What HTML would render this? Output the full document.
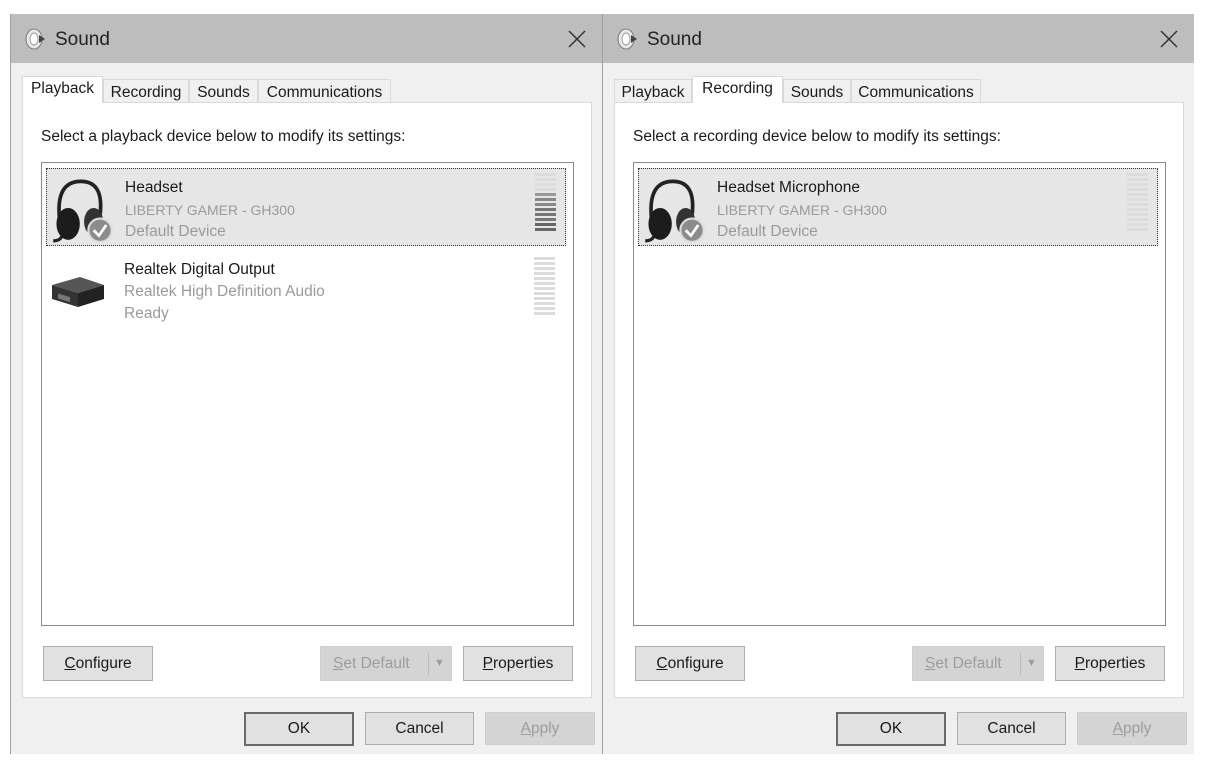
<!DOCTYPE html>
<html><head><style>
*{box-sizing:border-box;margin:0;padding:0}
body{width:1209px;height:767px;background:#fff;position:relative;overflow:hidden;font-family:"Liberation Sans",sans-serif;color:#1a1a1a}
.a{position:absolute}
.win{position:absolute;top:14px;width:592px;height:740px;background:#f0f0f0;border-left:1px solid #a0a0a0}
.title{position:absolute;left:0;top:0;right:0;height:49px;background:#bdbdbd}
.title .t{position:absolute;left:44px;top:15px;font-size:19px;color:#222}
.panel{position:absolute;left:11px;top:88px;width:570px;height:596px;background:#fff;border:1px solid #d9d9d9}
.tab{position:absolute;top:65px;height:24px;background:#f0f0f0;border:1px solid #d9d9d9;border-bottom:none;font-size:15.5px;padding:4px 0 0 0;text-align:center}
.tab.sel{top:62px;height:27px;background:#fff;z-index:2;padding-top:3px}
.hdr{position:absolute;left:30px;top:114px;font-size:15.5px}
.list{position:absolute;left:30px;top:148px;width:533px;height:464px;border:1px solid #8a8a8a;background:#fff}
.item{position:absolute;left:4px;width:520px;height:78px}
.item.s{background:#e6e6e6;border:1px dotted #333}
.n{position:absolute;left:78px;font-size:15.5px;color:#1a1a1a}
.g{position:absolute;left:78px;font-size:15.5px;color:#9a9a9a}
.meter{position:absolute;left:488px;width:21px}
.meter div{height:3px;margin-bottom:2px;background:#dcdcdc}
.btn{position:absolute;height:35px;background:#e1e1e1;border:1px solid #adadad;font-size:15.5px;text-align:center;line-height:33px}
.dis{background:#d4d4d4;border-color:#cfcfcf;color:#9d9d9d}
u{text-decoration:underline}
</style></head><body>

<!-- LEFT -->
<div class="win" style="left:10px">
 <div class="title">
  <svg class="a" style="left:13px;top:13px" width="24" height="24" viewBox="0 0 24 24"><ellipse cx="10" cy="12" rx="8" ry="10" fill="#e8e8e8" stroke="#777"/><ellipse cx="10" cy="12" rx="4" ry="6" fill="#fff" stroke="#999"/><path d="M15 8 L21 12 L15 16 Z" fill="#444"/></svg>
  <div class="t">Sound</div>
  <svg class="a" style="right:16px;top:16px" width="18" height="18" viewBox="0 0 18 18"><path d="M1 1L17 17M17 1L1 17" stroke="#333" stroke-width="1.5"/></svg>
 </div>
 <div class="tab sel" style="left:11px;width:81px">Playback</div>
 <div class="tab" style="left:92px;width:86px">Recording</div>
 <div class="tab" style="left:178px;width:69px">Sounds</div>
 <div class="tab" style="left:247px;width:133px">Communications</div>
 <div class="panel"></div>
 <div class="hdr">Select a playback device below to modify its settings:</div>
 <div class="list">
  <div class="item s" style="top:5px">
   <svg class="a" style="left:4px;top:6px" width="64" height="68" viewBox="0 0 60 64"><path d="M8 42 Q4 6 28 6 Q50 6 46 38" fill="none" stroke="#222" stroke-width="3.5"/><ellipse cx="16" cy="46" rx="11" ry="15" fill="#1c1c1c"/><ellipse cx="40" cy="44" rx="9" ry="13" fill="#333"/><path d="M10 58 Q8 62 2 62" stroke="#222" stroke-width="3" fill="none"/><circle cx="46" cy="52" r="11" fill="#8c8c8c" stroke="#ddd" stroke-width="2"/><path d="M40 52 L45 57 L52 47" stroke="#fff" stroke-width="2.5" fill="none"/></svg>
   <div class="n" style="top:10px">Headset</div>
   <div class="g" style="top:33px;font-size:14px">LIBERTY GAMER - GH300</div>
   <div class="g" style="top:54px">Default Device</div>
   <div class="meter" style="top:4px"><div></div><div></div><div></div><div></div><div style="background:#999"></div><div style="background:#888"></div><div style="background:#888"></div><div style="background:#777"></div><div style="background:#777"></div><div style="background:#777"></div><div style="background:#666"></div><div style="background:#666"></div></div>
  </div>
  <div class="item" style="top:88px">
   <svg class="a" style="left:4px;top:22px" width="56" height="36" viewBox="0 0 56 36"><path d="M2 12 L30 4 L54 12 L28 20 Z" fill="#555"/><path d="M2 12 L28 20 L28 34 L2 26 Z" fill="#333"/><path d="M28 20 L54 12 L54 26 L28 34 Z" fill="#222"/><rect x="8" y="18" width="12" height="5" fill="#777" transform="skewY(17)"/></svg>
   <div class="n" style="top:10px">Realtek Digital Output</div>
   <div class="g" style="top:32px">Realtek High Definition Audio</div>
   <div class="g" style="top:54px">Ready</div>
   <div class="meter" style="top:6px"><div></div><div></div><div></div><div></div><div></div><div></div><div></div><div></div><div></div><div></div><div></div><div></div></div>
  </div>
 </div>
 <div class="btn" style="left:32px;top:632px;width:110px"><u>C</u>onfigure</div>
 <div class="btn dis" style="left:309px;top:632px;width:132px;text-align:left;padding-left:12px"><u>S</u>et Default<span class="a" style="left:107px;top:6px;height:22px;border-left:1px solid #bbb"></span><span class="a" style="left:113px;top:0;font-size:11px">▼</span></div>
 <div class="btn" style="left:452px;top:632px;width:110px"><u>P</u>roperties</div>
 <div class="btn" style="left:233px;top:698px;width:110px;height:34px;border:2px solid #6a6a6a;line-height:30px">OK</div>
 <div class="btn" style="left:354px;top:698px;width:109px;height:33px;line-height:31px">Cancel</div>
 <div class="btn dis" style="left:474px;top:698px;width:110px;height:33px;line-height:31px"><u>A</u>pply</div>
</div>

<!-- RIGHT -->
<div class="win" style="left:602px">
 <div class="title">
  <svg class="a" style="left:13px;top:13px" width="24" height="24" viewBox="0 0 24 24"><ellipse cx="10" cy="12" rx="8" ry="10" fill="#e8e8e8" stroke="#777"/><ellipse cx="10" cy="12" rx="4" ry="6" fill="#fff" stroke="#999"/><path d="M15 8 L21 12 L15 16 Z" fill="#444"/></svg>
  <div class="t">Sound</div>
  <svg class="a" style="right:16px;top:16px" width="18" height="18" viewBox="0 0 18 18"><path d="M1 1L17 17M17 1L1 17" stroke="#333" stroke-width="1.5"/></svg>
 </div>
 <div class="tab" style="left:11px;width:78px">Playback</div>
 <div class="tab sel" style="left:89px;width:91px">Recording</div>
 <div class="tab" style="left:180px;width:68px">Sounds</div>
 <div class="tab" style="left:248px;width:130px">Communications</div>
 <div class="panel"></div>
 <div class="hdr">Select a recording device below to modify its settings:</div>
 <div class="list">
  <div class="item s" style="top:5px">
   <svg class="a" style="left:4px;top:6px" width="64" height="68" viewBox="0 0 60 64"><path d="M8 42 Q4 6 28 6 Q50 6 46 38" fill="none" stroke="#222" stroke-width="3.5"/><ellipse cx="16" cy="46" rx="11" ry="15" fill="#1c1c1c"/><ellipse cx="40" cy="44" rx="9" ry="13" fill="#333"/><path d="M10 58 Q8 62 2 62" stroke="#222" stroke-width="3" fill="none"/><circle cx="46" cy="52" r="11" fill="#8c8c8c" stroke="#ddd" stroke-width="2"/><path d="M40 52 L45 57 L52 47" stroke="#fff" stroke-width="2.5" fill="none"/></svg>
   <div class="n" style="top:10px">Headset Microphone</div>
   <div class="g" style="top:33px;font-size:14px">LIBERTY GAMER - GH300</div>
   <div class="g" style="top:54px">Default Device</div>
   <div class="meter" style="top:4px"><div></div><div></div><div></div><div></div><div></div><div></div><div></div><div></div><div></div><div></div><div></div><div></div></div>
  </div>
 </div>
 <div class="btn" style="left:32px;top:632px;width:110px"><u>C</u>onfigure</div>
 <div class="btn dis" style="left:309px;top:632px;width:132px;text-align:left;padding-left:12px"><u>S</u>et Default<span class="a" style="left:107px;top:6px;height:22px;border-left:1px solid #bbb"></span><span class="a" style="left:113px;top:0;font-size:11px">▼</span></div>
 <div class="btn" style="left:452px;top:632px;width:110px"><u>P</u>roperties</div>
 <div class="btn" style="left:233px;top:698px;width:110px;height:34px;border:2px solid #6a6a6a;line-height:30px">OK</div>
 <div class="btn" style="left:354px;top:698px;width:109px;height:33px;line-height:31px">Cancel</div>
 <div class="btn dis" style="left:474px;top:698px;width:110px;height:33px;line-height:31px"><u>A</u>pply</div>
</div>
</body></html>
